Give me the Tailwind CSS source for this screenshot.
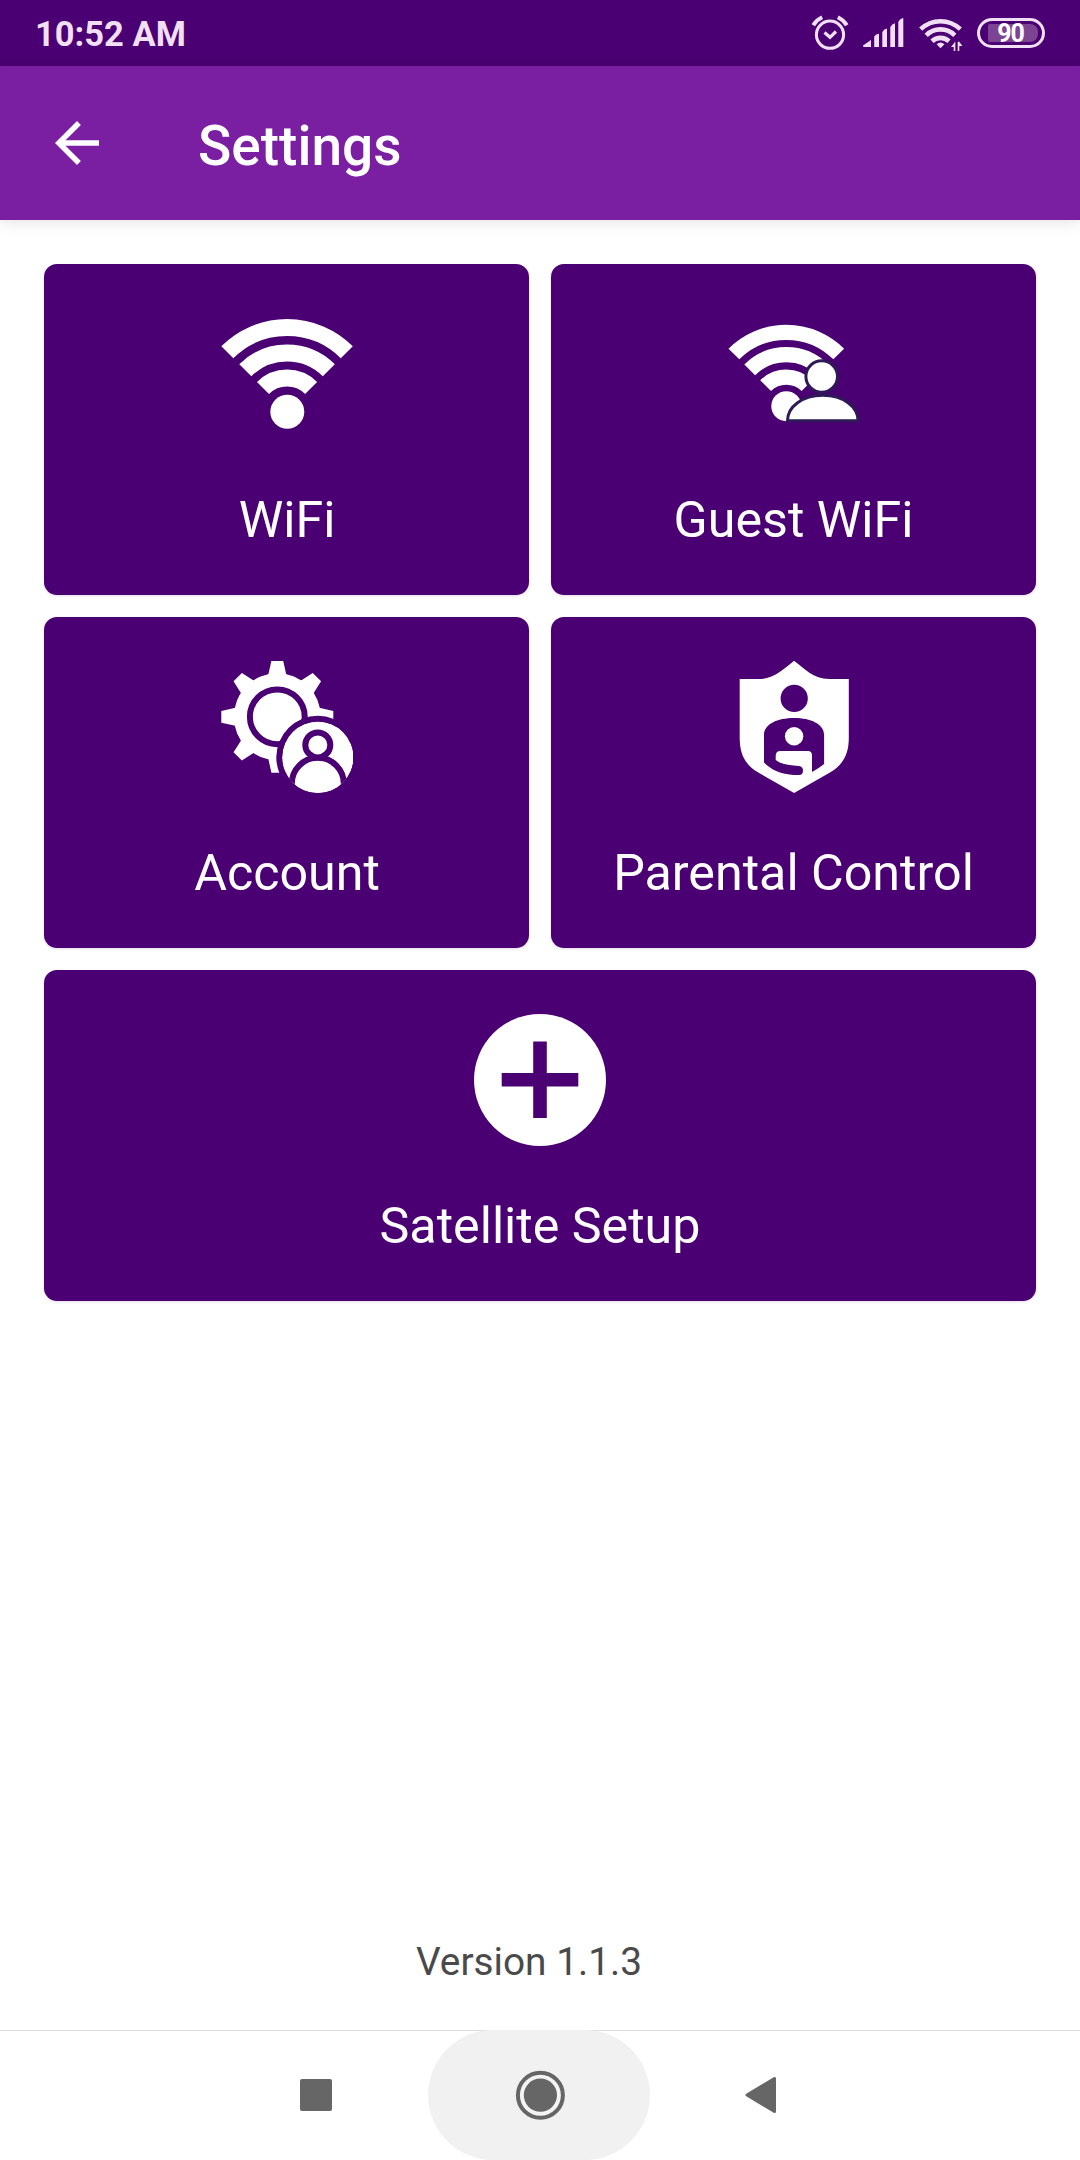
<!DOCTYPE html>
<html lang="en">

<head>
    <meta charset="UTF-8">
    <meta name="viewport" content="width=device-width, initial-scale=1.0">
    <title>Settings</title>
    <script src="https://cdn.jsdelivr.net/npm/@tailwindcss/browser@4"></script>
</head>

<body class="bg-white font-['Roboto',sans-serif]">
    <div class="w-[1080px] h-[2160px] flex flex-col overflow-hidden">
        <!-- Status bar -->
        <div class="h-[66px] shrink-0 bg-[#4a0072] text-[#f1dff5] flex items-center justify-between pl-[35px] pr-[35px]">
            <span id="clock" class="text-[34.5px] font-bold leading-none whitespace-nowrap pt-[2px]">10:52 AM</span>
            <div class="flex items-center h-full">
                <svg class="w-[36px] h-[36px] mr-[15px]" viewBox="1 0 36 36" fill="none" stroke="currentColor" stroke-width="3" overflow="visible">
                    <circle cx="18" cy="19.7" r="13.6" />
                    <path d="M12.5 17.5L18 22.3L24 16.5" stroke-width="3.2" />
                    <path d="M1.3 10.3C3.5 6.5 6 4.2 10.2 2.3M25.8 2.3C30 4.2 32.5 6.5 34.7 10.3" stroke-width="4" />
                </svg>
                <svg class="w-[41px] h-[36px] mr-[14px]" viewBox="1 0 41 36" fill="currentColor" overflow="visible">
                    <path d="M0 30.5L8 25V32H1Q0 32 0 30.5zM11.2 21.5Q13 19 16 18.8V32H11.2zM19.3 17Q21 13.8 24 13.5V32H19.3zM27.3 12Q29 8.8 32 8.3V32H27.3zM35.3 7Q37 3.5 40.3 3V32H35.3z" />
                </svg>
                <svg class="w-[44px] h-[36px] mr-[14px]" viewBox="0 0 44 36" fill="none" stroke="currentColor" stroke-width="4.6" overflow="visible">
                    <path d="M1.7 14.2A28.5 28.5 0 0 1 41.3 14.2" />
                    <path d="M7.2 20.3A20.2 20.2 0 0 1 35.8 20.3" />
                    <path d="M13 26.2A12.5 12.5 0 0 1 30 26.2" />
                    <path d="M21.5 33.2L17.6 29.3Q21.5 25.5 25.4 29.3z" fill="currentColor" stroke="none" />
                    <path d="M36.3 27V36H34.7V32L32 32L36.3 26.5zM38.7 35.5V27L40 26.5L43.5 31H40.3V36H38.7z" fill="currentColor" stroke="none" />
                </svg>
                <div class="w-[68px] h-[30px] rounded-full border-3 border-[#f1dff5] p-[3px_4px_3px_8px]">
                    <div class="h-full rounded-r-[8px] rounded-l-[2px] bg-[#7d4493] flex items-center justify-center pr-[5px] text-[25px] font-bold leading-none tracking-[-1px] text-white"><span class="scale-y-105">90</span></div>
                </div>
            </div>
        </div>

        <!-- App bar -->
        <header class="h-[154px] shrink-0 bg-[#7b1fa2] text-white flex items-center pl-[44px] shadow-[0_2px_14px_rgba(0,0,0,0.12)]">
            <svg class="w-[66px] h-[66px]" viewBox="0 0 24 24" fill="currentColor">
                <path d="M20 11H7.83l5.59-5.59L12 4l-8 8 8 8 1.41-1.41L7.83 13H20v-2z" />
            </svg>
            <h1 id="title" class="ml-[88px] pt-[7px] text-[55px] font-medium leading-none">Settings</h1>
        </header>

        <!-- Menu cards -->
        <main class="grid grid-cols-2 gap-[22px] px-[44px] pt-[44px] text-white text-[50.2px] leading-[60px]">
            <a class="h-[331px] rounded-[13px] bg-[#4a0072] shadow-[0_1px_3px_rgba(74,0,114,0.15)] flex flex-col items-center pt-[44px]">
                <svg class="w-[132px] h-[132px]" viewBox="0 0 132 132" fill="none" stroke="white" stroke-width="17">
                    <path d="M6.3 44.3A84.5 84.5 0 0 1 125.8 44.3" />
                    <path d="M24.3 62.3A59 59 0 0 1 107.8 62.3" />
                    <path d="M42 80A34 34 0 0 1 90.1 80" />
                    <circle cx="66.3" cy="103.8" r="17" fill="white" stroke="none" />
                </svg>
                <span class="mt-[50px] pl-[1px]">WiFi</span>
            </a>
            <a class="h-[331px] rounded-[13px] bg-[#4a0072] shadow-[0_1px_3px_rgba(74,0,114,0.15)] flex flex-col items-center pt-[44px]">
                <svg class="w-[132px] h-[132px]" viewBox="0.5 0 132 132" fill="none" stroke="white" stroke-width="15.2">
                    <path d="M6.4 46A74.1 74.1 0 0 1 111.2 46" />
                    <path d="M22.2 61.8A51.8 51.8 0 0 1 95.4 61.8" />
                    <path d="M38.1 77.7A29.3 29.3 0 0 1 79.5 77.7" />
                    <circle cx="58.8" cy="98.2" r="15" fill="white" stroke="none" />
                    <g fill="white" stroke="#2e1a57" stroke-width="3">
                        <circle cx="94.2" cy="68.5" r="15.8" />
                        <path d="M60 112.8C60 98.5 75 87.3 95.3 87.3C115.6 87.3 130.6 98.5 130.6 112.8z" />
                    </g>
                </svg>
                <span class="mt-[50px]">Guest WiFi</span>
            </a>
            <a class="h-[331px] rounded-[13px] bg-[#4a0072] shadow-[0_1px_3px_rgba(74,0,114,0.15)] flex flex-col items-center pt-[44px]">
                <svg class="w-[132px] h-[132px]" viewBox="0 0 132 132" fill="white">
                    <defs>
                        <path id="teeth" d="M-9 -42L-5.9 -56H5.9L9 -42V42L5.9 56H-5.9L-9 42z" />
                        <clipPath id="badge">
                            <circle cx="96.8" cy="96.3" r="35.7" />
                        </clipPath>
                    </defs>
                    <g transform="translate(56.3 55.8)">
                        <circle r="43.5" />
                        <use href="#teeth" />
                        <use href="#teeth" transform="rotate(45)" />
                        <use href="#teeth" transform="rotate(90)" />
                        <use href="#teeth" transform="rotate(135)" />
                        <circle r="27.4" stroke="#4a0072" stroke-width="6" />
                    </g>
                    <circle cx="96.8" cy="96.3" r="41.5" fill="#4a0072" />
                    <g clip-path="url(#badge)">
                        <circle cx="96.8" cy="96.3" r="35.7" />
                        <g stroke="#4a0072" stroke-width="6">
                            <circle cx="96.8" cy="122.7" r="26" />
                            <circle cx="96.8" cy="83.9" r="12.5" />
                        </g>
                    </g>
                </svg>
                <span class="mt-[50px] pl-[1px]">Account</span>
            </a>
            <a class="h-[331px] rounded-[13px] bg-[#4a0072] shadow-[0_1px_3px_rgba(74,0,114,0.15)] flex flex-col items-center pt-[44px]">
                <svg class="w-[132px] h-[132px]" viewBox="0.5 0 132 132" fill="white">
                    <path d="M66.6 -0.2C76 7 86 18 101.5 18H121.3V77C121.3 94 115 104 102.5 111.5L66.6 132L30.7 111.5C18.2 104 12.2 94 12.2 77V18H31.7C47 18 57 7 66.6 -0.2z" />
                    <g fill="#4a0072">
                        <circle cx="66.7" cy="37.4" r="13.6" />
                        <path d="M36.5 101.5V74C36.5 63 50 57 66.6 57C83.2 57 96.6 63 96.6 74V103Q91 107.5 84.5 111V94.5Q84.5 90 80.5 90H53Q48.2 90 48.2 95V99C54 103.5 62 104.3 71.5 105Q75.5 105.5 75.5 109.5Q75.5 114 71.5 114H66.5C54 113.5 43 108.5 36.5 101.5z" />
                    </g>
                    <circle cx="66.6" cy="75.3" r="9.2" />
                </svg>
                <span class="mt-[50px]">Parental Control</span>
            </a>
            <a class="col-span-2 h-[331px] rounded-[13px] bg-[#4a0072] shadow-[0_1px_3px_rgba(74,0,114,0.15)] flex flex-col items-center pt-[44px]">
                <svg class="w-[132px] h-[132px]" viewBox="0 0 132 132">
                    <circle cx="66" cy="66" r="66" fill="white" />
                    <path d="M27.7 65.7H104.3M66 27.5V104" stroke="#4a0072" stroke-width="13.6" />
                </svg>
                <span class="mt-[50px]">Satellite Setup</span>
            </a>
        </main>

        <p class="mt-auto mb-[44px] pr-[22px] text-center text-[38.8px] leading-[48px] text-[#4a4a4a]">Version 1.1.3</p>

        <!-- Navigation bar -->
        <nav class="h-[130px] shrink-0 border-t border-[#dedede] text-[#666666] flex justify-center pr-[2px]">
            <div class="w-[222px] h-[130px] flex items-center -mt-[1px]">
                <svg class="w-[32px] h-[32px] ml-[94px]" viewBox="0 0 32 32" fill="currentColor">
                    <rect width="32" height="32" rx="2" />
                </svg>
            </div>
            <div class="w-[222px] h-[130px] shrink-0 rounded-full bg-[#f1f1f1] flex items-center justify-center -mt-[1px]">
                <svg class="w-[50px] h-[50px]" viewBox="0 0 50 50" overflow="visible">
                    <circle cx="26.4" cy="25.2" r="22.5" fill="#f4f4f4" stroke="currentColor" stroke-width="4" />
                    <circle cx="26.4" cy="25.2" r="16.6" fill="currentColor" />
                </svg>
            </div>
            <div class="w-[222px] h-[130px] flex items-center -mt-[1px]">
                <svg class="w-[32px] h-[38px] ml-[95px]" viewBox="0 0 32 38" fill="currentColor" stroke="currentColor" stroke-width="3" stroke-linejoin="round">
                    <path d="M2 19L29.5 2.5V35.5z" />
                </svg>
            </div>
        </nav>
    </div>
</body>

</html>
